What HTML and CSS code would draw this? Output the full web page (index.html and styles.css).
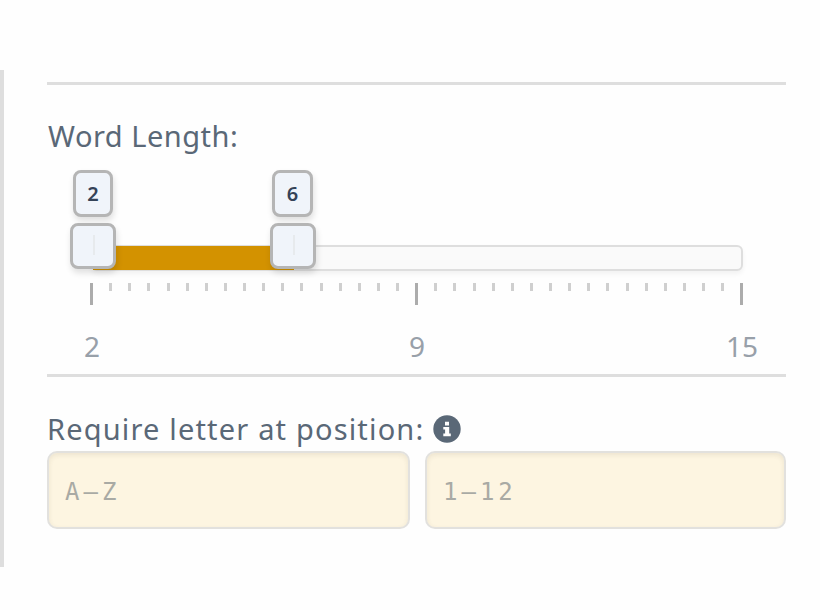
FILE: index.html
```
<!DOCTYPE html>
<html lang="en">
<head>
<meta charset="utf-8">
<title>Word filters</title>
<link rel="stylesheet" href="styles.css">
</head>
<body>
<main class="panel">
  <section class="group length">
    <h2 class="title"><span class="t-length">Word Length:</span></h2>
    <div class="slider">
      <div class="track"><div class="range"></div></div>
      <div class="tip tip-low">2</div>
      <div class="tip tip-high">6</div>
      <div class="handle handle-low"></div>
      <div class="handle handle-high"></div>
    </div>
    <div class="ticks">
      <i class="major"></i><i></i><i></i><i></i><i></i><i></i><i></i><i></i><i></i><i></i><i></i><i></i><i></i><i></i><i></i><i></i><i></i>
      <i class="major"></i><i></i><i></i><i></i><i></i><i></i><i></i><i></i><i></i><i></i><i></i><i></i><i></i><i></i><i></i><i></i><i></i>
      <i class="major"></i>
    </div>
    <div class="labels"><span>2</span><span>9</span><span>15</span></div>
  </section>
  <section class="group position">
    <h2 class="title"><span class="t-position">Require letter at position:</span>
      <svg class="info" viewBox="0 0 28 28"><circle cx="14" cy="14" r="13.7" fill="#5a6877"/><path fill="#fefefe" d="M12 6.7h4v3.8h-4zM10.3 12h5.9v6.6h1.6v2.6h-7.5v-2.6h1.8v-4h-1.8z"/></svg>
    </h2>
    <div class="fields">
      <input class="field" type="text" placeholder="A–Z">
      <input class="field" type="text" placeholder="1–12">
    </div>
  </section>
</main>
</body>
</html>
```
FILE: styles.css
```
* { box-sizing: border-box; }
body {
  margin: 0;
  padding-top: 70px;
  background: #fefefe;
  color: #5a6877;
  font-family: "Noto Sans", sans-serif;
}
.panel {
  height: 497px;
  padding: 12px 34px 0 43px;
  border-left: 4px solid #dedede;
}
.group { border-top: 3px solid #dedede; }
.length { height: 292px; padding-top: 31px; }
.position { padding-top: 32px; }
.title {
  display: flex;
  align-items: center;
  height: 40px;
  margin: 0;
  font-size: 29px;
  font-weight: 400;
  line-height: 40px;
  white-space: nowrap;
}
.t-length { padding-left: 1px; letter-spacing: 0.5px; }
.t-position { letter-spacing: 1.17px; }
.info { width: 28px; height: 28px; margin-left: 9px; }
.slider {
  position: relative;
  height: 114px;
  padding: 89px 43px 0 44px;
}
.track {
  height: 26px;
  border: 2px solid #dedede;
  border-radius: 6px;
  background: #fafafa;
  box-shadow: 0 3px 5px rgba(0, 0, 0, 0.05);
}
.range {
  width: 201px;
  height: 24px;
  margin-top: -1px;
  background: #d39200;
}
.tip, .handle {
  position: absolute;
  border: 3px solid #b5b5b5;
  border-radius: 8px;
  background: #f0f4fa;
  box-shadow: 1px 4px 6px rgba(0, 0, 0, 0.12);
}
.tip {
  top: 14px;
  width: 40px;
  height: 47px;
  color: #344257;
  font-size: 20px;
  font-weight: 600;
  line-height: 42px;
  text-align: center;
}
.tip-low { left: 26px; }
.tip-high { left: 225px; width: 41px; }
.handle {
  top: 67px;
  width: 46px;
  height: 46px;
}
.handle::before {
  content: "";
  display: block;
  width: 2px;
  height: 20px;
  margin: 9px 0 0 20px;
  background: #e7eaed;
}
.handle-low { left: 23px; }
.handle-high { left: 223px; }
.ticks {
  display: flex;
  justify-content: space-between;
  height: 38px;
  margin: 13px 42.5px 0 43px;
}
.ticks i { width: 3px; height: 8px; background: #cfcfcf; }
.ticks .major { height: 22px; background: #acacac; }
.labels {
  display: flex;
  justify-content: space-between;
  margin: 5px 14px 0 15px;
  color: #98a0a9;
  font-size: 28px;
  line-height: 40px;
}
.labels span { width: 60px; text-align: center; }
.fields { display: grid; grid-template-columns: 363px 361px; gap: 15px; margin-top: 2px; }
.field {
  width: 100%;
  height: 78px;
  padding: 3px 16px 0;
  border: 2px solid #e2e1de;
  border-radius: 10px;
  background: #fdf5e1;
  box-shadow: inset 0 2px 5px rgba(70, 60, 30, 0.09);
  font: 24px "DejaVu Sans Mono", monospace;
  letter-spacing: 4px;
}
.field::placeholder { color: #a9aaa4; opacity: 1; }
```
